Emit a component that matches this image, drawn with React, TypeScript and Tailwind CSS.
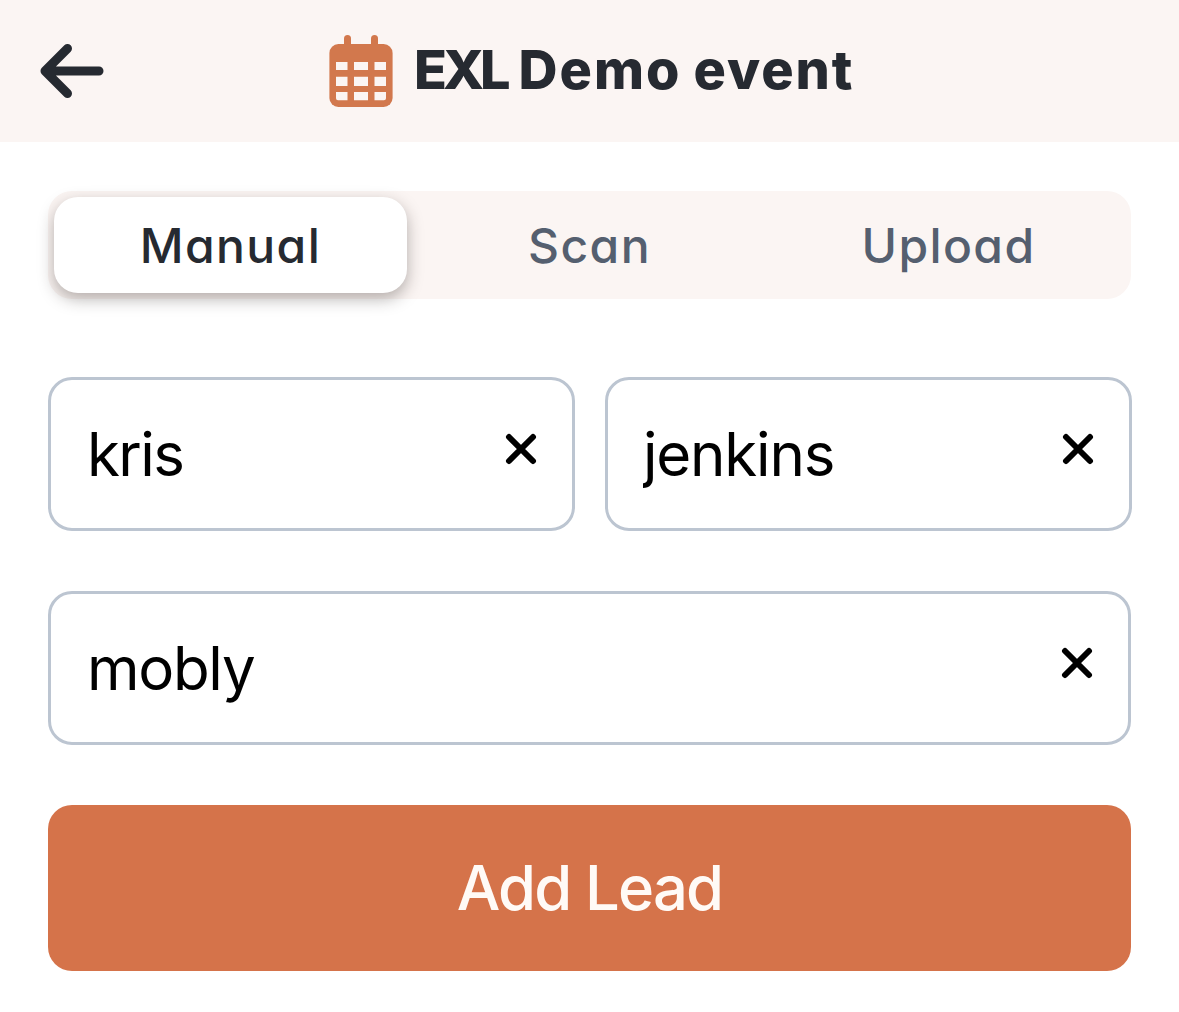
import React, { useState } from 'react';

const TABS = ['Manual', 'Scan', 'Upload'];

function BackArrow() {
  return (
    <svg width="66" height="58" viewBox="0 0 66 58" fill="none" stroke="#262a31" strokeWidth="9" strokeLinecap="round" strokeLinejoin="round">
      <path d="M28.5 6.5L6 29L28.5 51.5M6 29H60" />
    </svg>
  );
}

function CalendarIcon() {
  return (
    <svg className="shrink-0" width="64" height="72" viewBox="0 0 64 72" fill="#d2784d">
      <rect x="15" y="0" width="7" height="14" rx="3.5" />
      <rect x="42" y="0" width="7" height="14" rx="3.5" />
      <rect x="0.4" y="9" width="63.2" height="63" rx="9" />
      <g fill="#fbf5f3">
        <path d="M7 27h11.5v8H7zM25 27h14v8H25zM45.5 27H57v8H45.5z" />
        <path d="M7 41.7h11.5V51H7zM25 41.7h14V51H25zM45.5 41.7H57V51H45.5z" />
        <path d="M7 57h11.5v8.3H9a2 2 0 0 1-2-2zM25 57h14v8.3H25zM45.5 57H57v6.3a2 2 0 0 1-2 2h-9.5z" />
      </g>
    </svg>
  );
}

function Field({ initial, className }: { initial: string; className: string }) {
  const [value, setValue] = useState(initial);

  return (
    <div className="flex h-[154px] items-center rounded-3xl border-[3px] border-[#bcc5d1] bg-white pr-[35px] pl-[37px]">
      <input
        value={value}
        onChange={(e) => setValue(e.target.value)}
        className={`h-full min-w-0 flex-1 bg-transparent text-[60px] text-black outline-none ${className}`}
      />
      <button onClick={() => setValue('')} className="mb-[10px]" aria-label="Clear">
        <svg width="32" height="32" viewBox="0 0 32 32" stroke="#000" strokeWidth="6" strokeLinecap="round">
          <path d="M4 4L28 28M28 4L4 28" />
        </svg>
      </button>
    </div>
  );
}

export default function App() {
  const [active, setActive] = useState('Manual');

  return (
    <div className="min-h-screen bg-white font-['Inter',sans-serif]">
      {/* Header */}
      <header className="grid h-[142px] grid-cols-[290px_1fr_290px] items-center bg-[#fbf5f3]">
        <button className="pl-[39px]" aria-label="Back">
          <BackArrow />
        </button>
        <div className="flex items-center pl-[39px]">
          <CalendarIcon />
          <h1 className="ml-[21px] flex items-baseline gap-[12px] pb-[2px] text-[54px] leading-none font-extrabold whitespace-nowrap text-[#262a31] [font-feature-settings:'cv11']">
            <span className="tracking-[-4px]">EXL</span>
            <span className="tracking-[2px]">Demo</span>
            <span className="tracking-[1.9px]">event</span>
          </h1>
        </div>
      </header>

      <main className="px-12 pt-[49px]">
        {/* Tabs */}
        <div className="grid h-[108px] grid-cols-3 gap-[6px] rounded-3xl bg-[#fbf5f3] p-[6px]">
          {TABS.map((tab) => (
            <button
              key={tab}
              onClick={() => setActive(tab)}
              className={`rounded-3xl pt-px text-[48px] font-medium tracking-[1.4px] [font-feature-settings:'cv11'] ${
                active === tab
                  ? 'bg-white text-[#262a31] shadow-[0_6px_16px_rgba(40,32,28,0.34)]'
                  : 'text-[#555f6f]'
              }`}
            >
              {tab}
            </button>
          ))}
        </div>

        {/* Lead form */}
        <div className="-mr-px mt-[78px] grid grid-cols-2 gap-[30px]">
          <Field initial="kris" className="-ml-px tracking-[-1.6px]" />
          <Field initial="jenkins" className="-ml-[2px] tracking-[-1.2px]" />
        </div>
        <div className="mt-[60px]">
          <Field initial="mobly" className="-ml-px tracking-[-1.3px]" />
        </div>
        <button className="mt-[60px] h-[166px] w-full rounded-3xl bg-[#d5734a] text-[61.5px] font-medium tracking-[-1.8px] text-[#fffaf6]">
          Add Lead
        </button>
      </main>
    </div>
  );
}
